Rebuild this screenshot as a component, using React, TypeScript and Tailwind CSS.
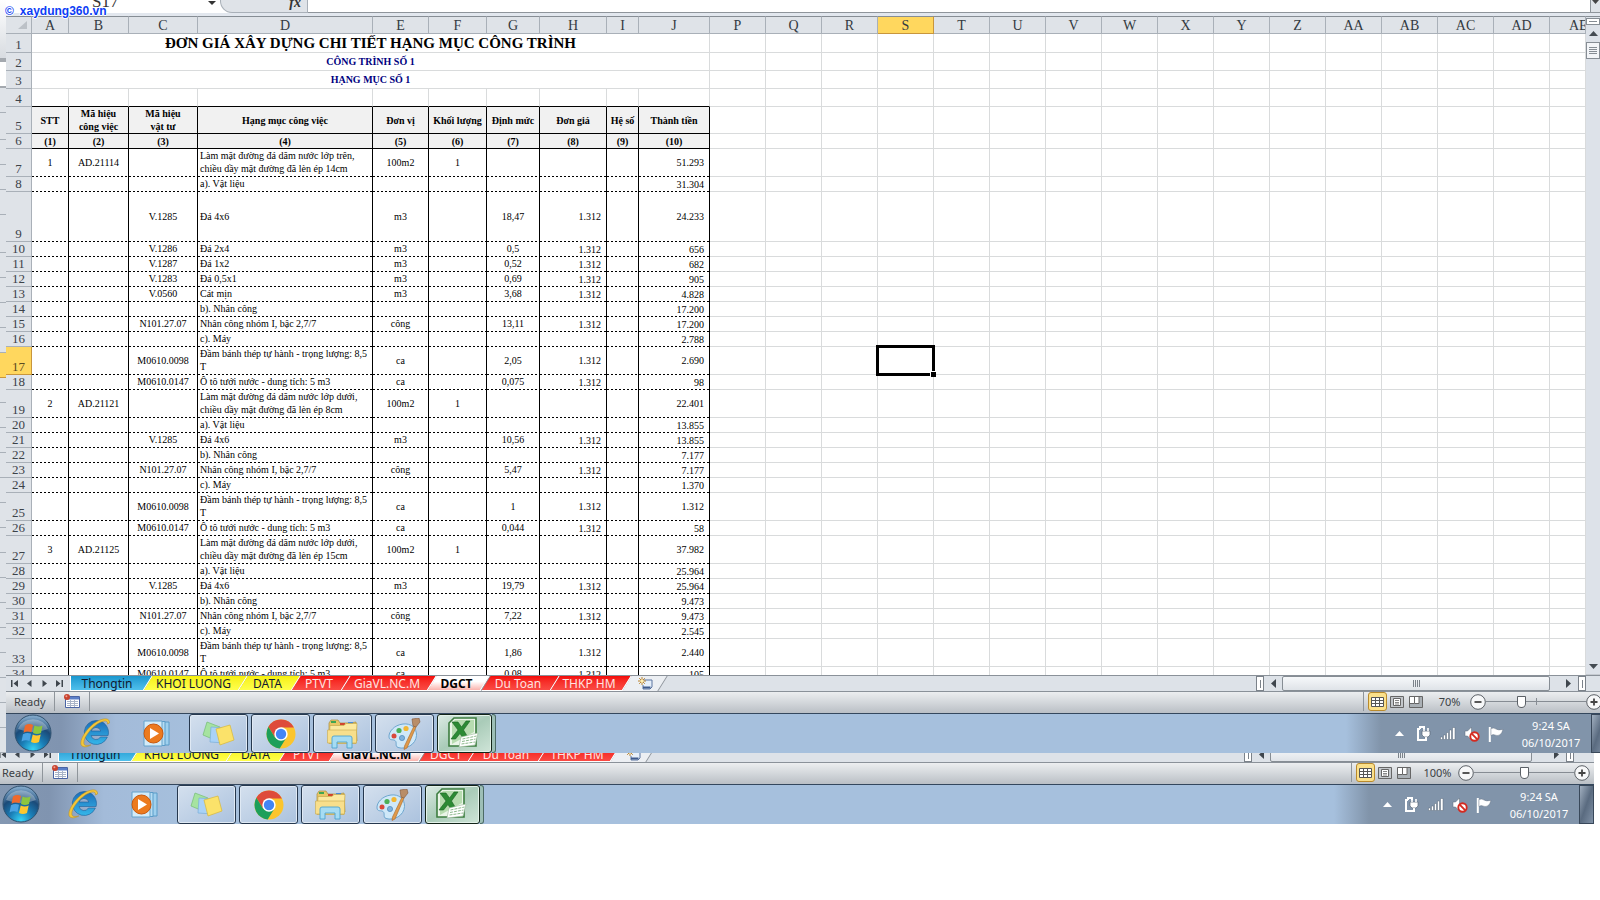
import React from "react";

type Line = { no: number; h: string; c: string[] };

const S = "h-[15px]";
const D = "h-[28px]";

const LINES: Line[] = [
  { no: 7, h: D, c: ["1", "AD.21114", "", "Làm mặt đường đá dăm nước lớp trên,\nchiều dầy mặt đường đã lèn ép 14cm", "100m2", "1", "", "", "", "51.293"] },
  { no: 8, h: S, c: ["", "", "", "a). Vật liệu", "", "", "", "", "", "31.304"] },
  { no: 9, h: "h-[50px]", c: ["", "", "V.1285", "Đá 4x6", "m3", "", "18,47", "1.312", "", "24.233"] },
  { no: 10, h: S, c: ["", "", "V.1286", "Đá 2x4", "m3", "", "0,5", "1.312", "", "656"] },
  { no: 11, h: S, c: ["", "", "V.1287", "Đá 1x2", "m3", "", "0,52", "1.312", "", "682"] },
  { no: 12, h: S, c: ["", "", "V.1283", "Đá 0,5x1", "m3", "", "0,69", "1.312", "", "905"] },
  { no: 13, h: S, c: ["", "", "V.0560", "Cát mịn", "m3", "", "3,68", "1.312", "", "4.828"] },
  { no: 14, h: S, c: ["", "", "", "b). Nhân công", "", "", "", "", "", "17.200"] },
  { no: 15, h: S, c: ["", "", "N101.27.07", "Nhân công nhóm I, bậc 2,7/7", "công", "", "13,11", "1.312", "", "17.200"] },
  { no: 16, h: S, c: ["", "", "", "c). Máy", "", "", "", "", "", "2.788"] },
  { no: 17, h: D, c: ["", "", "M0610.0098", "Đầm bánh thép tự hành - trọng lượng: 8,5\nT", "ca", "", "2,05", "1.312", "", "2.690"] },
  { no: 18, h: S, c: ["", "", "M0610.0147", "Ô tô tưới nước - dung tích: 5 m3", "ca", "", "0,075", "1.312", "", "98"] },
  { no: 19, h: D, c: ["2", "AD.21121", "", "Làm mặt đường đá dăm nước lớp dưới,\nchiều dầy mặt đường đã lèn ép 8cm", "100m2", "1", "", "", "", "22.401"] },
  { no: 20, h: S, c: ["", "", "", "a). Vật liệu", "", "", "", "", "", "13.855"] },
  { no: 21, h: S, c: ["", "", "V.1285", "Đá 4x6", "m3", "", "10,56", "1.312", "", "13.855"] },
  { no: 22, h: S, c: ["", "", "", "b). Nhân công", "", "", "", "", "", "7.177"] },
  { no: 23, h: S, c: ["", "", "N101.27.07", "Nhân công nhóm I, bậc 2,7/7", "công", "", "5,47", "1.312", "", "7.177"] },
  { no: 24, h: S, c: ["", "", "", "c). Máy", "", "", "", "", "", "1.370"] },
  { no: 25, h: D, c: ["", "", "M0610.0098", "Đầm bánh thép tự hành - trọng lượng: 8,5\nT", "ca", "", "1", "1.312", "", "1.312"] },
  { no: 26, h: S, c: ["", "", "M0610.0147", "Ô tô tưới nước - dung tích: 5 m3", "ca", "", "0,044", "1.312", "", "58"] },
  { no: 27, h: D, c: ["3", "AD.21125", "", "Làm mặt đường đá dăm nước lớp dưới,\nchiều dầy mặt đường đã lèn ép 15cm", "100m2", "1", "", "", "", "37.982"] },
  { no: 28, h: S, c: ["", "", "", "a). Vật liệu", "", "", "", "", "", "25.964"] },
  { no: 29, h: S, c: ["", "", "V.1285", "Đá 4x6", "m3", "", "19,79", "1.312", "", "25.964"] },
  { no: 30, h: S, c: ["", "", "", "b). Nhân công", "", "", "", "", "", "9.473"] },
  { no: 31, h: S, c: ["", "", "N101.27.07", "Nhân công nhóm I, bậc 2,7/7", "công", "", "7,22", "1.312", "", "9.473"] },
  { no: 32, h: S, c: ["", "", "", "c). Máy", "", "", "", "", "", "2.545"] },
  { no: 33, h: D, c: ["", "", "M0610.0098", "Đầm bánh thép tự hành - trọng lượng: 8,5\nT", "ca", "", "1,86", "1.312", "", "2.440"] },
  { no: 34, h: S, c: ["", "", "M0610.0147", "Ô tô tưới nước - dung tích: 5 m3", "ca", "", "0,08", "1.312", "", "105"] },
];

const COLS: [string, string][] = [
  ["A", "w-[37px]"], ["B", "w-[60px]"], ["C", "w-[69px]"], ["D", "w-[175px]"], ["E", "w-[56px]"],
  ["F", "w-[58px]"], ["G", "w-[53px]"], ["H", "w-[67px]"], ["I", "w-[32px]"], ["J", "w-[71px]"],
];
const FREE = ["P", "Q", "R", "S", "T", "U", "V", "W", "X", "Y", "Z", "AA", "AB", "AC", "AD", "AE"];
const HEADS = ["STT", "Mã hiệu\ncông việc", "Mã hiệu\nvật tư", "Hạng mục công việc", "Đơn vị", "Khối lượng", "Định mức", "Đơn giá", "Hệ số", "Thành tiền"];

const SERIF = "font-['Liberation_Serif','Times_New_Roman',serif]";
const SANS = "font-['Noto_Sans','Open_Sans',sans-serif]";
const GRID = "border-r border-b border-[#d9dbdc]";

function RowNo({ n, active }: { n: number; active?: boolean }) {
  return (
    <th
      scope="row"
      className={
        "overflow-hidden border-r border-b p-0 pb-[1px] text-center align-bottom text-[13px] leading-[13px] font-normal " +
        (active ? "border-[#c8963c] bg-[#ffd75e] text-[#5a4a20]" : "border-[#a9b0b8] bg-[#dfe3e8] text-[#3c4248]")
      }
    >
      {n}
    </th>
  );
}

function FreeCells({ row }: { row: number }) {
  return (
    <>
      {FREE.map((f) =>
        row === 17 && f === "S" ? (
          <td key={f} className={"relative p-0 " + GRID}>
            <span className="absolute -top-[2px] -right-[2px] -bottom-[2px] -left-[2px] border-[3px] border-black" />
            <span className="absolute -right-[3px] -bottom-[3px] h-[6px] w-[6px] border-t border-l border-white bg-black" />
          </td>
        ) : (
          <td key={f} className={"p-0 " + GRID} />
        ),
      )}
    </>
  );
}

function Sheet() {
  return (
    <table className={"w-full table-fixed border-separate border-spacing-0 text-[10px] leading-[13px] text-black " + SERIF}>
      <colgroup>
        <col className="w-[26px]" />
        {COLS.map(([n, w]) => <col key={n} className={w} />)}
        {FREE.map((f) => <col key={f} className={f === "AE" ? "" : "w-[56px]"} />)}
      </colgroup>
      <thead>
        <tr className="h-[18px] text-[14px] leading-[14px] text-[#333a41]">
          <th className="border-t border-r border-b border-[#a9b0b8] border-t-[#868d94] bg-[#dfe3e8] p-0">
            <svg className="mr-[4px] ml-auto block h-[8px] w-[9px]" viewBox="0 0 9 8"><path d="M9 0v8H0z" fill="#bcc1c7" /></svg>
          </th>
          {COLS.map(([n]) => (
            <th key={n} scope="col" className="border-t border-r border-b border-[#a9b0b8] border-t-[#868d94] bg-[#dfe3e8] p-0 pt-[2px] font-normal">{n}</th>
          ))}
          {FREE.map((n) => (
            <th
              key={n}
              scope="col"
              className={
                "overflow-hidden border-t border-r border-b border-t-[#868d94] p-0 pt-[2px] font-normal " +
                (n === "S" ? "border-[#c8963c] bg-[#ffd75e] " : "border-[#a9b0b8] bg-[#dfe3e8] ") +
                (n === "AE" ? "pl-[19px] text-left" : "")
              }
            >
              {n}
            </th>
          ))}
        </tr>
      </thead>
      <tbody>
        <tr className="h-[19px]">
          <RowNo n={1} />
          <td colSpan={10} className={"p-0 text-center text-[15px] leading-[18px] font-bold " + GRID}>ĐƠN GIÁ XÂY DỰNG CHI TIẾT HẠNG MỤC CÔNG TRÌNH</td>
          <FreeCells row={1} />
        </tr>
        <tr className="h-[18px]">
          <RowNo n={2} />
          <td colSpan={10} className={"p-0 text-center font-bold text-[#000080] " + GRID}>CÔNG TRÌNH SỐ 1</td>
          <FreeCells row={2} />
        </tr>
        <tr className="h-[18px]">
          <RowNo n={3} />
          <td colSpan={10} className={"p-0 text-center font-bold text-[#000080] " + GRID}>HẠNG MỤC SỐ 1</td>
          <FreeCells row={3} />
        </tr>
        <tr className="h-[18px]">
          <RowNo n={4} />
          {COLS.map(([n]) => <td key={n} className="border-r border-b border-r-[#d9dbdc] border-b-black p-0" />)}
          <FreeCells row={4} />
        </tr>
        <tr className="h-[27px]">
          <RowNo n={5} />
          {HEADS.map((t) => (
            <td key={t} className="border-r border-b border-black bg-[#f1f1f1] p-0 text-center font-bold whitespace-pre">{t}</td>
          ))}
          <FreeCells row={5} />
        </tr>
        <tr className="h-[15px]">
          <RowNo n={6} />
          {HEADS.map((t, i) => (
            <td key={t} className="border-r border-b border-black bg-[#f1f1f1] p-0 text-center font-bold">({i + 1})</td>
          ))}
          <FreeCells row={6} />
        </tr>
        {LINES.map((l) => (
          <tr key={l.no} className={l.h}>
            <RowNo n={l.no} active={l.no === 17} />
            {l.c.map((t, i) => (
              <td
                key={i}
                className={
                  "border-r border-black bg-[repeating-linear-gradient(90deg,#000_0_2px,#fff_2px_4px)] bg-[length:100%_1px] bg-bottom bg-no-repeat p-0 whitespace-pre " +
                  (i === 3 ? "pb-[2px] pl-[2px] text-left" : i === 7 || i === 9 ? "pr-[5px] pb-[1px] text-right" : "pb-[2px] text-center")
                }
              >
                {t}
              </td>
            ))}
            <FreeCells row={l.no} />
          </tr>
        ))}
      </tbody>
    </table>
  );
}

function VScroll() {
  return (
    <div className="flex w-[14px] shrink-0 flex-col border-t border-[#868d94] bg-[#dde2e9]">
      <div className="mt-[1px] flex h-[7px] items-center justify-center border border-[#868d94] bg-white">
        <span className="h-px w-[8px] bg-[#868d94]" />
      </div>
      <button aria-label="Scroll up" className="flex h-[17px] items-center justify-center">
        <svg className="h-[5px] w-[9px]" viewBox="0 0 9 5"><path d="M4.500 0L9 5H0z" fill="#444b52" /></svg>
      </button>
      <div className="flex h-[17px] flex-col items-center justify-center gap-px border border-[#868d94] bg-[#f3f5f8]">
        <span className="h-px w-[8px] bg-[#868d94]" />
        <span className="h-px w-[8px] bg-[#868d94]" />
        <span className="h-px w-[8px] bg-[#868d94]" />
        <span className="h-px w-[8px] bg-[#868d94]" />
      </div>
      <div className="flex-1" />
      <button aria-label="Scroll down" className="flex h-[17px] items-center justify-center border-b border-[#c5cad0]">
        <svg className="h-[5px] w-[9px]" viewBox="0 0 9 5"><path d="M0 0h9L4.500 5z" fill="#444b52" /></svg>
      </button>
    </div>
  );
}

type Tab = { t: string; w: string; k: "b" | "y" | "r" };
const FILL = {
  b: "bg-linear-to-b from-[#1797cf] to-[#4fc0ec]",
  y: "bg-linear-to-b from-[#f6f000] to-[#ffff4a]",
  r: "bg-linear-to-b from-[#f40606] to-[#fa4a44]",
};

function TabBar({ tabs, active, second }: { tabs: Tab[]; active: string; second?: boolean }) {
  return (
    <div className={"flex h-[17px] w-full shrink-0 items-stretch border-t border-b border-[#8a9199] bg-[#dde2e8] " + SANS}>
      <div className="flex w-[64px] shrink-0 items-center gap-[8px] pl-[5px]">
        {["M0 0h1.500v7H0zM7 0v7L2.500 3.500z", "M5.500 0v7L1 3.500z", "M1.500 0v7L6 3.500z", "M5.500 0H7v7H5.500zM0 0v7l4.500-3.500z"].map((d, i) => (
          <button key={i} aria-label={["First sheet", "Previous sheet", "Next sheet", "Last sheet"][i]}>
            <svg className="block h-[7px] w-[7px]" viewBox="0 0 7 7"><path d={d} fill="#3f464d" /></svg>
          </button>
        ))}
      </div>
      {tabs.map((s) => {
        const on = s.t === active;
        const first = s.k === "b";
        return (
          <button
            key={s.t}
            className={
              "relative isolate flex shrink-0 items-center justify-center pr-[4px] text-[12px] leading-[15px] whitespace-nowrap " + s.w + " " +
              (on ? "z-10 font-bold text-black" : s.k === "r" ? "text-[#ffe3e0]" : "text-[#101a30]")
            }
          >
            {first && <span className={"absolute inset-y-0 left-0 -z-10 w-[40px] border-b border-l border-white " + FILL.b} />}
            <span
              className={
                "absolute inset-y-0 -z-10 -skew-x-[32deg] border-r border-b border-white " + (first ? "right-0 left-[10px] " : "inset-x-0 ") +
                (on ? "bg-linear-to-b from-white from-40% to-[#f9b3ad] shadow-[1px_0_0_#8a9199]" : FILL[s.k] + " shadow-[1px_0_0_#a0a6ac]")
              }
            />
            {s.t}
          </button>
        );
      })}
      <button aria-label="Insert sheet" className="relative isolate flex w-[36px] shrink-0 items-center justify-center">
        <span className="absolute inset-0 -z-10 -skew-x-[32deg] border-r border-[#8a9199] bg-[#eceff3]" />
        <svg className="h-[13px] w-[15px]" viewBox="0 0 15 13">
          <path d="M6 3h8v7l-2 2H5V8" fill="#e6effa" stroke="#5a74a0" />
          <path d="M5 10.500h7.500" stroke="#3f5a8c" strokeWidth="2" />
          <path d="M4 0v8M0 4h8M1.200 1.200l5.600 5.600M6.800 1.200L1.200 6.800" stroke="#b9822c" />
          <circle cx="4" cy="4" r="1.500" fill="#fff0b0" />
        </svg>
      </button>
      <div className="flex-1" />
      <span className="flex w-[8px] items-center justify-center border border-[#7b828a] bg-white"><i className="h-[8px] w-px bg-[#7b828a]" /></span>
      <button aria-label="Scroll left" className="flex w-[18px] items-center justify-center">
        <svg className="h-[9px] w-[5px]" viewBox="0 0 5 9"><path d="M5 0v9L0 4.500z" fill="#3f464d" /></svg>
      </button>
      <div className={"flex items-center justify-center gap-px rounded-[2px] border border-[#868d94] bg-linear-to-b from-[#f6f8fa] to-[#dfe3e8] " + (second ? "mr-[6px] w-[262px]" : "w-[268px]")}>
        {[0, 1, 2, 3].map((i) => <span key={i} className="h-[7px] w-px bg-[#7b828a]" />)}
      </div>
      <button aria-label="Scroll right" className="flex w-[28px] items-center justify-center pl-[9px]">
        <svg className="h-[9px] w-[5px]" viewBox="0 0 5 9"><path d="M0 0v9l5-4.500z" fill="#3f464d" /></svg>
      </button>
      <span className="mr-[20px] flex w-[8px] items-center justify-center border border-[#7b828a] bg-white"><i className="h-[8px] w-px bg-[#7b828a]" /></span>
    </div>
  );
}

function StatusBar({ zoom, value, id }: { zoom: string; value: number; id: string }) {
  return (
    <div className={"flex h-[21px] shrink-0 items-center bg-linear-to-b from-[#eceef0] via-[#d3d7db] to-[#babfc5] pb-[2px] text-[11px] leading-[16px] text-[#3b3f44] " + SANS}>
      <span className="w-[48px] pl-[8px]">Ready</span>
      <span className="h-[19px] w-px bg-[#8f959b]" />
      <svg className="mx-[9px] h-[15px] w-[16px]" viewBox="0 0 16 15">
        <path d="M1.500 2.500h14v11h-14z" fill="#fff" stroke="#4a64a4" />
        <path d="M2 3h13v2.500H2z" fill="#5b7fc8" />
        <path d="M3 7.500h11M3 9.500h11M3 11.500h11M6.500 6v7M10.500 6v7" stroke="#a9b4c8" />
        <circle cx="3" cy="3" r="3" fill="#c8432f" /><circle cx="2.400" cy="2.200" r="1" fill="#f0a090" />
      </svg>
      <span className="h-[19px] w-px bg-[#8f959b]" />
      <div className="flex-1" />
      <span className="h-[19px] w-px bg-[#8f959b]" />
      <div className="ml-[4px] flex w-[57px] items-center gap-[3px]">
        <button aria-label="Normal view" className="flex h-[19px] w-[19px] items-center justify-center rounded-[3px] border border-[#b98a2c] bg-[#fbe08a]">
          <svg className="h-[10px] w-[13px]" viewBox="0 0 13 10"><path d="M.5.500h12v9H.5z" fill="#fff" stroke="#555" /><path d="M4.500 0v10M8.500 0v10M0 3.500h13M0 6.500h13" stroke="#555" /></svg>
        </button>
        <button aria-label="Page layout">
          <svg className="block h-[12px] w-[14px]" viewBox="0 0 14 12"><path d="M.5.500h13v11H.5z" fill="#c3c7cb" stroke="#666" /><path d="M3.500 2.500h7v7h-7z" fill="#fff" stroke="#666" /><path d="M5 4.500h4M5 6.500h4M5 8h4" stroke="#888" /></svg>
        </button>
        <button aria-label="Page break preview" className="ml-[2px]">
          <svg className="block h-[12px] w-[14px]" viewBox="0 0 14 12"><path d="M.5.500h13v11H.5z" fill="#aab0b5" stroke="#666" /><path d="M1 1h4v6H1zM6 1h4v6H6z" fill="#fff" /><path d="M5.500 1v6.500H1M10 1v6.500H6" fill="none" stroke="#666" /></svg>
        </button>
      </div>
      <label htmlFor={id} className="flex w-[45px] justify-center pl-[4px]">{zoom}</label>
      <button aria-label="Zoom out"><svg className="block h-[16px] w-[16px]" viewBox="0 0 16 16"><circle cx="8" cy="8" r="7.300" fill="#f7f8f9" stroke="#5b6066" /><path d="M4.500 8h7" stroke="#444" strokeWidth="1.800" /></svg></button>
      <input
        id={id}
        type="range"
        min={0}
        max={100}
        defaultValue={value}
        className="h-[14px] w-[100px] appearance-none bg-[linear-gradient(#868c93,#868c93),linear-gradient(#868c93,#868c93)] bg-[length:100%_1px,1px_7px] bg-center bg-no-repeat [&::-webkit-slider-thumb]:h-[12px] [&::-webkit-slider-thumb]:w-[9px] [&::-webkit-slider-thumb]:appearance-none [&::-webkit-slider-thumb]:rounded-t-[1px] [&::-webkit-slider-thumb]:rounded-b-[5px] [&::-webkit-slider-thumb]:border [&::-webkit-slider-thumb]:border-[#5b6066] [&::-webkit-slider-thumb]:bg-white"
      />
      <button aria-label="Zoom in" className="mr-[4px]"><svg className="block h-[16px] w-[16px]" viewBox="0 0 16 16"><circle cx="8" cy="8" r="7.300" fill="#f7f8f9" stroke="#5b6066" /><path d="M4.500 8h7M8 4.500v7" stroke="#444" strokeWidth="1.800" /></svg></button>
    </div>
  );
}

const orb = (
  <svg className="h-[38px] w-[38px]" viewBox="0 0 38 38">
    <defs>
      <radialGradient id="orbFill" cx=".5" cy=".95" r=".9">
        <stop offset="0" stopColor="#37d3f5" /><stop offset=".35" stopColor="#1a7fb8" /><stop offset=".7" stopColor="#1b4a78" /><stop offset="1" stopColor="#7fa6c8" />
      </radialGradient>
    </defs>
    <circle cx="19" cy="19" r="18" fill="url(#orbFill)" stroke="#31526f" />
    <path d="M4 15a15.500 13 0 0 1 30 0q-15 6-30 0z" fill="#fff" opacity=".3" />
    <path d="M11 11.500q4-2.500 8-.5l-1.500 7.300q-4-1.700-8 .4z" fill="#ef6a2c" />
    <path d="M20.500 11.500q4 2 8 0L27 19q-4 2-8 0z" fill="#8cc63e" />
    <path d="M9 20.200q4-2.200 8-.5L15.500 27q-4-1.800-8 .5z" fill="#4aa3e4" />
    <path d="M18.700 20.500q4 2 8 0L25 28q-4 2-8 0z" fill="#fdc72f" />
  </svg>
);
const ie = (
  <svg className="h-[32px] w-[32px]" viewBox="0 0 32 32">
    <defs><linearGradient id="ieFill" x2="0" y2="1"><stop stopColor="#1b6cb8" /><stop offset="1" stopColor="#35b7ea" /></linearGradient></defs>
    <path fillRule="evenodd" d="M17 3.500A12 12 0 1 0 28.400 20h-7a5 5 0 0 1-9.300-1.500h17A12 12 0 0 0 17 3.500zM12.200 14a5 5 0 0 1 9.600 0z" fill="url(#ieFill)" stroke="#1c5c97" strokeWidth=".6" />
    <path d="M30.500 6C31 1 25 .5 18 4.500 9 9.500 2 20 1.800 26c0 5 6 4.500 10 2-4 1-7 1-7-2.500C5 20 12 11 19 6.500 25 3 29 3 28.500 7z" fill="#f3c63a" stroke="#b98d1c" strokeWidth=".5" />
  </svg>
);
const wmp = (
  <svg className="h-[27px] w-[30px]" viewBox="0 0 30 27">
    <path d="M8 2h19v23H8z" fill="#9fd0ee" stroke="#5b9cc8" /><path d="M5 1.500h18v24H5z" fill="#b6dcf2" stroke="#5b9cc8" />
    <path d="M2 1h18v25H2z" fill="#d3ebf8" stroke="#64a2cb" />
    <circle cx="11.500" cy="13.500" r="9.500" fill="#ec7a1e" stroke="#c9580c" /><path d="M8 8l9 5.500L8 19z" fill="#fff" />
  </svg>
);
const notes = (
  <svg className="h-[26px] w-[33px]" viewBox="0 0 33 26">
    <path d="M5 1l13 5-5 13L1 14z" fill="#a6e3a0" stroke="#74bd74" strokeWidth=".7" />
    <path d="M9 6l15 1-1 15-15-1z" fill="#a9d2f7" stroke="#79add8" strokeWidth=".7" />
    <path d="M14 8l14-4 4 15-14 5z" fill="#fbe26a" stroke="#d9b838" strokeWidth=".7" />
  </svg>
);
const chrome = (
  <svg className="h-[30px] w-[30px]" viewBox="0 0 30 30">
    <circle cx="15" cy="15" r="14.500" fill="#fbc52d" />
    <path d="M15 .5A14.500 14.500 0 0 0 2.400 7.800L9 18.500 15 15V8.500h12.900A14.500 14.500 0 0 0 15 .5z" fill="#de4b3b" />
    <path d="M2.400 7.800a14.500 14.500 0 0 0 11.300 21.600L20.600 18.200 15 15l-6 3.400z" fill="#1c9f5a" />
    <circle cx="15" cy="15" r="6.700" fill="#fff" /><circle cx="15" cy="15" r="5.200" fill="#4285f4" />
  </svg>
);
const explorer = (
  <svg className="h-[30px] w-[34px]" viewBox="0 0 34 30">
    <path d="M3 4l2-3h7l2 3h10l6-1 1 19H3z" fill="#e8c766" stroke="#a98e3c" strokeWidth=".7" />
    <path d="M5 2h5v2H5z" fill="#3fa652" /><path d="M14 4h5v2h-5z" fill="#d2452c" /><path d="M22 3h5v2h-5z" fill="#4a8bd4" />
    <path d="M4 6.500h14l2-2h11l-1 20H3z" fill="#fbe9a0" stroke="#c7a94e" strokeWidth=".7" />
    <path d="M1.500 11h29v13h-29z" fill="#f8df8c" stroke="#c7a94e" strokeWidth=".6" />
    <path d="M6 29V19q0-2 2-2h16q2 0 2 2v10h-5v-6H11v6z" fill="#a6dcf3" stroke="#4da3cf" strokeWidth=".9" />
  </svg>
);
const paint = (
  <svg className="h-[32px] w-[33px]" viewBox="0 0 33 32">
    <path d="M15 6C6 7 .5 14 1 19c.4 4 4 2 6 3.500 2.500 2-.5 5.500 3 7 8 2.500 18-3 18.500-12C28.800 10 23 5 15 6z" fill="#cfe8f8" stroke="#6ea6cf" />
    <circle cx="6" cy="18" r="2.500" fill="#d9483b" /><circle cx="11" cy="12.500" r="2.600" fill="#4cb058" /><circle cx="18" cy="10.500" r="2.600" fill="#f2b632" /><circle cx="14" cy="20" r="2.600" fill="#7fb2dc" stroke="#4a86bc" strokeWidth=".7" />
    <path d="M26 8l2 1-9 21-3 1.500.5-3.500z" fill="#e09a4a" stroke="#a8682a" strokeWidth=".6" />
    <path d="M24 1l7-1 1 4-4 5-3-1z" fill="#b98d68" stroke="#82583a" strokeWidth=".6" />
  </svg>
);
const excel = (
  <svg className="h-[31px] w-[31px]" viewBox="0 0 31 31">
    <path d="M6 1h22v28H1V6z" fill="#eaf5e8" stroke="#3c7d3f" strokeWidth="1.600" />
    <path d="M4 6l3-3h19v12L4 27z" fill="#b7dcb0" />
    <path d="M4 5h6l3.500 5L18 4h4l-6.500 9L21 22h-5.500l-3.500-5.500L7.500 22H3l7-9z" fill="#2c8a34" stroke="#1a6222" strokeWidth=".6" />
    <path d="M13 20l17-4-3 12-16 2z" fill="#fff" stroke="#9ab89a" strokeWidth=".6" />
    <path d="M14.500 22l14-3M14 24.500l13.500-2.500M13.500 27l13.500-2" stroke="#8dba8d" strokeDasharray="3 1" />
  </svg>
);

const TASKS: [string, React.ReactNode][] = [["Sticky Notes", notes], ["Chrome", chrome], ["Windows Explorer", explorer], ["Paint", paint]];

function Taskbar() {
  return (
    <div className={"flex h-[40px] shrink-0 items-stretch border-t border-[#34475d] bg-[linear-gradient(90deg,#8498b2_0,#8094b0_55px,#a3bbd9_110px,#a6c0dd_200px,#a6c0dd_calc(100%-260px),#8194aa_calc(100%-225px),#8194aa_100%)] " + SANS}>
      <button aria-label="Start" className="flex w-[54px] items-center justify-center pb-[1px]">{orb}</button>
      <button aria-label="Internet Explorer" className="flex w-[70px] items-center justify-center pb-[2px]">{ie}</button>
      <button aria-label="Media Player" className="flex w-[59px] items-center justify-center pr-[5px]">{wmp}</button>
      <div className="flex gap-[3px]">
        {TASKS.map(([n, icon]) => (
          <button key={n} aria-label={n} className="flex w-[59px] items-center justify-center rounded-[3px] border border-[#26384e] bg-linear-to-br from-[#d4e0ee] to-[#abc2de] shadow-[inset_0_0_0_1px_#dfe9f4]">{icon}</button>
        ))}
        <button aria-label="Excel" className="flex">
          <span className="flex w-[55px] items-center justify-center rounded-[3px] border border-[#122418] bg-linear-to-br from-[#dcebe4] via-[#a9cbb8] to-[#cfe5d8] pr-[3px] pb-[2px] shadow-[inset_0_0_0_1px_#e4f2ea]">{excel}</span>
          <span className="w-[4px] rounded-r-[3px] border-y border-r border-[#4c6b66] bg-[#9dbfb6]" />
        </button>
      </div>
      <div className="flex-1" />
      <div className="mr-[15px] flex items-center">
        <svg className="mr-[12px] h-[5px] w-[9px]" viewBox="0 0 9 5"><path d="M4.500 0L9 5H0z" fill="#fff" /></svg>
        <svg className="mr-[9px] h-[16px] w-[15px]" viewBox="0 0 15 16">
          <path d="M4 3H2v11h8v-3M4 3V1h4v2" fill="none" stroke="#fff" strokeWidth="2" /><path d="M6 5h8v4l-2 2H8L6 9z" fill="#fff" stroke="#5a6878" strokeWidth=".7" /><path d="M8 5V2M12 5V2M10 11v4" stroke="#fff" strokeWidth="1.600" />
        </svg>
        <svg className="mr-[8px] h-[13px] w-[16px]" viewBox="0 0 16 13"><path d="M.5 10h2v2.500h-2zM3.500 8h2v4.500h-2zM6.500 5.500h2v7h-2zM9.500 3h2v9.500h-2zM12.500.500h2.500v12h-2.500z" fill="#fff" stroke="#5a6878" strokeWidth=".5" /></svg>
        <svg className="mr-[8px] h-[16px] w-[16px]" viewBox="0 0 16 16"><path d="M1 5h2.500L7.500 1v13L3.500 10H1z" fill="#fff" stroke="#5a6878" strokeWidth=".5" /><circle cx="10.500" cy="10.500" r="4.200" fill="#fff" stroke="#d42a20" strokeWidth="1.900" /><path d="M7.700 7.700l5.600 5.600" stroke="#d42a20" strokeWidth="1.900" /></svg>
        <svg className="h-[16px] w-[16px]" viewBox="0 0 16 16"><path d="M1.800 1v15" stroke="#fff" strokeWidth="2" /><path d="M3 2.500q3-1 5 .5t7 .5q-1 4-3.500 5.500Q9 10 7 9T3 9.500z" fill="#fff" stroke="#5a6878" strokeWidth=".4" /></svg>
      </div>
      <div className="flex w-[64px] flex-col items-center pt-[3px] text-[11px] leading-[17px] text-white">
        <span>9:24 SA</span>
        <span>06/10/2017</span>
      </div>
      <div className="ml-[8px] w-[15px] border border-[#39485a] bg-linear-to-br from-[#a2b0c0] via-[#5a6b80] to-[#8091a6]" />
    </div>
  );
}

const STRIP = [
  "h-[25px]", "h-[27px]", "h-[25px]", "h-[25px]", "h-[25px]", "h-[38px]", "h-[25px]", "h-[25px]", "h-[25px]", "h-[25px]", "h-[25px]",
  "h-[25px]", "h-[25px]", "h-[25px]", "h-[25px]", "h-[25px]", "h-[25px]", "h-[25px]", "h-[25px]", "h-[25px]", "h-[25px]", "h-[25px]",
  "h-[25px]", "h-[25px]", "h-[25px]", "h-[25px]",
];

const BASE: Tab[] = [
  { t: "Thongtin", w: "w-[78px]", k: "b" }, { t: "KHOI LUONG", w: "w-[95px]", k: "y" }, { t: "DATA", w: "w-[53px]", k: "y" }, { t: "PTVT", w: "w-[50px]", k: "r" },
];
const TABS1: Tab[] = [...BASE, { t: "GiaVL.NC.M", w: "w-[86px]", k: "r" }, { t: "DGCT", w: "w-[53px]", k: "r" }, { t: "Du Toan", w: "w-[70px]", k: "r" }, { t: "THKP HM", w: "w-[72px]", k: "r" }];
const TABS2: Tab[] = [...BASE, { t: "GiaVL.NC.M", w: "w-[89px]", k: "r" }, { t: "DGCT", w: "w-[50px]", k: "r" }, { t: "Du Toan", w: "w-[70px]", k: "r" }, { t: "THKP HM", w: "w-[72px]", k: "r" }];

export default function App() {
  return (
    <div className="relative min-h-screen overflow-hidden bg-white">
      <div className="flex">
        <aside className="flex h-[753px] w-[6px] shrink-0 flex-col overflow-hidden bg-[#dfe3e8]">
          <div className="h-[60px] shrink-0 border-b-2 border-[#a4a9af] bg-linear-to-b from-white to-[#d8dce1]" />
          <div className="h-[28px] shrink-0 border-y-2 border-[#a4a9af] bg-white" />
          {STRIP.map((h, i) => (
            <div key={i} className={"shrink-0 border-b " + h + " " + (i === 10 ? "border-[#c8963c] bg-[#ffd75e]" : "border-[#a9b0b8]")} />
          ))}
        </aside>
        <main className="min-w-0 flex-1 overflow-hidden">
          <div className="flex h-[16px] overflow-hidden border-b-[3px] border-[#e2e7ee] bg-white">
            <div className={"flex w-[214px] justify-between pr-[4px] pl-[86px] text-[17px] leading-[4px] text-[#333] " + SERIF}>
              <span>S17</span>
              <svg className="mt-[1px] h-[4px] w-[8px]" viewBox="0 0 8 4"><path d="M0 0h8L4 4z" fill="#333" /></svg>
            </div>
            <div className={"w-[88px] rounded-bl-[12px] border-b border-l border-r border-[#a9b0b8] bg-[#dfe3e8] pr-[6px] text-right text-[14px] leading-[6px] font-bold text-[#333] italic " + SERIF}>fx</div>
            <div className="flex-1 border-b border-[#8f959b]" />
            <div className="flex w-[10px] justify-center border-b border-l border-[#8f959b] bg-[#dfe3e8]">
              <svg className="h-[4px] w-[7px]" viewBox="0 0 7 4"><path d="M0 0h7L3.500 4z" fill="#444" /></svg>
            </div>
          </div>
          <div className="flex h-[659px] overflow-hidden">
            <div className="min-w-0 flex-1"><Sheet /></div>
            <VScroll />
          </div>
          <div className="w-screen">
            <TabBar tabs={TABS1} active="DGCT" />
            <StatusBar id="zoom-front" zoom="70%" value={34} />
            <Taskbar />
          </div>
        </main>
      </div>
      <div className="mr-[6px] flex h-[71px] flex-col justify-end overflow-hidden">
        <div className="-ml-[6px] w-screen">
          <TabBar tabs={TABS2} active="GiaVL.NC.M" second />
          <StatusBar id="zoom-back" zoom="100%" value={50} />
          <Taskbar />
        </div>
      </div>
      <div className="absolute top-[3px] left-[5px] flex gap-[6px] text-[12px] leading-[16px] font-bold text-[#0d3df5] [text-shadow:1px_0_#fff,-1px_0_#fff,0_1px_#fff,0_-1px_#fff] font-['Liberation_Sans',sans-serif]">
        <span>©</span>
        <span>xaydung360.vn</span>
      </div>
    </div>
  );
}
